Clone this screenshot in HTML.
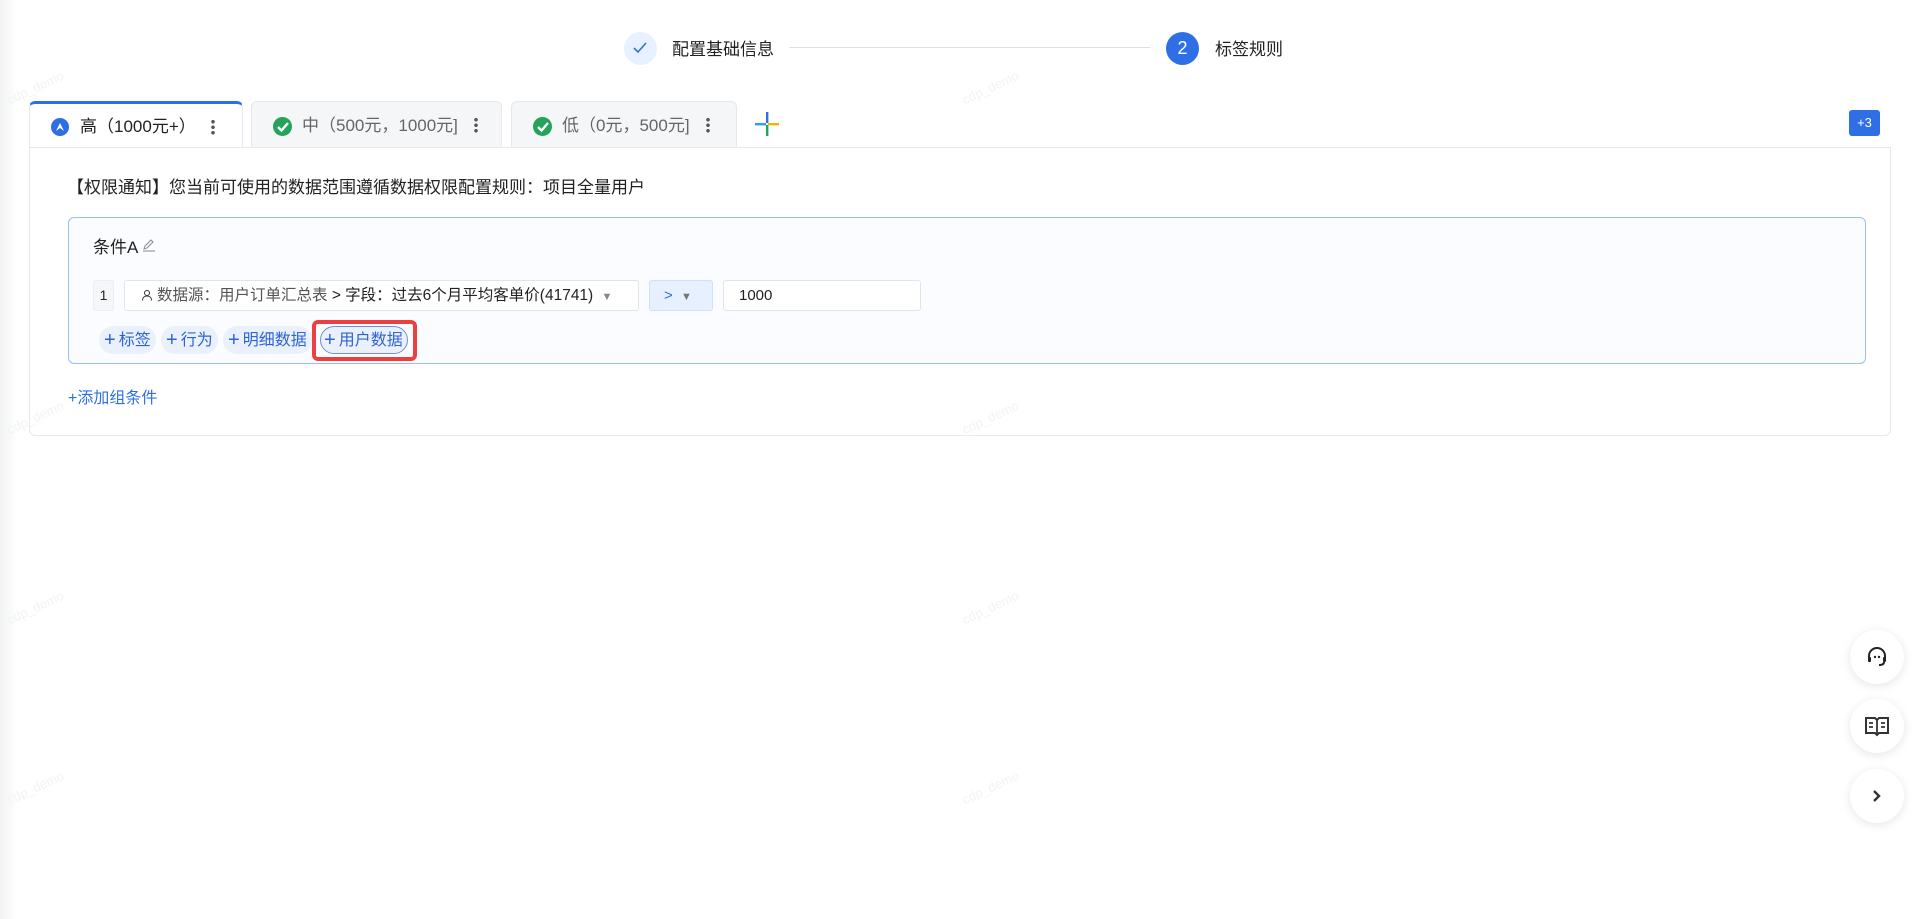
<!DOCTYPE html>
<html><head><meta charset="utf-8"><style>
*{box-sizing:border-box;margin:0;padding:0}
body{width:1918px;height:919px;background:#fff;font-family:"Liberation Sans","Noto Sans CJK SC",sans-serif;color:#1f2329;position:relative;overflow:hidden}
.abs{position:absolute}
.leftbar{left:0;top:0;width:16px;height:919px;background:linear-gradient(90deg,#f1f2f4,#fafafa 70%,#fff)}
.wm{position:absolute;color:#f2f3f5;font-size:13px;transform:rotate(-25deg)}
.tab{position:absolute;top:101px;height:47px;border:1px solid #e6e8eb;border-bottom:none;border-radius:6px 6px 0 0;background:#f5f6f8;display:flex;align-items:center;font-size:17px;color:#666}
.dots{position:absolute;width:4px;height:16px;background:radial-gradient(circle,#555 1.6px,transparent 2px) 0 0/4px 5.5px repeat-y}
.btn{position:absolute;top:326px;height:28px;border-radius:14px;background:#eaf1fd;color:#2d63d8;font-size:16px;line-height:28px;padding:0 5px}
.btn b{font-weight:normal;font-size:20px;vertical-align:-1px;margin-right:3px}
.circ{position:absolute;left:1850px;width:54px;height:54px;border-radius:50%;background:#fff;box-shadow:0 2px 10px rgba(0,0,0,.1);display:flex;align-items:center;justify-content:center}
</style></head><body>
<div class="abs leftbar"></div>
<div class="wm" style="left:5px;top:80px">cdp_demo</div><div class="wm" style="left:960px;top:80px">cdp_demo</div>
<div class="wm" style="left:5px;top:410px">cdp_demo</div><div class="wm" style="left:960px;top:410px">cdp_demo</div>
<div class="wm" style="left:5px;top:600px">cdp_demo</div><div class="wm" style="left:960px;top:600px">cdp_demo</div>
<div class="wm" style="left:5px;top:780px">cdp_demo</div><div class="wm" style="left:960px;top:780px">cdp_demo</div>

<!-- steps -->
<div class="abs" style="left:624px;top:32px;width:33px;height:33px;border-radius:50%;background:#e8f1ff"></div>
<svg class="abs" style="left:631px;top:40px" width="18" height="16"><path d="M3 8l4 4 8-9" stroke="#2f6fe6" stroke-width="1.6" fill="none"/></svg>
<div class="abs" style="left:672px;top:35px;font-size:17px;color:#222">配置基础信息</div>
<div class="abs" style="left:789px;top:47px;width:361px;height:1px;background:#dcdfe4"></div>
<div class="abs" style="left:1166px;top:32px;width:33px;height:33px;border-radius:50%;background:#2f6fe6;color:#fff;font-size:18px;text-align:center;line-height:33px">2</div>
<div class="abs" style="left:1215px;top:35px;font-size:17px;color:#222">标签规则</div>

<!-- tabs -->
<div class="tab" style="left:29px;width:214px;background:#fff;border-top:3px solid #2f6fe6;color:#222">
 <div class="abs" style="left:21px;top:14px;width:18px;height:18px;border-radius:50%;background:#2f6fe6"></div>
 <svg class="abs" style="left:24px;top:17px" width="12" height="12"><path d="M2 10L6 2l4 8L6 7z" fill="#fff"/></svg>
 <span class="abs" style="left:50px;top:8px">高（1000元+）</span>
 <div class="dots" style="left:181px;top:15px"></div>
</div>
<div class="tab" style="left:251px;width:251px">
 <div class="abs" style="left:21px;top:15px;width:19px;height:19px;border-radius:50%;background:#24a35a"></div>
 <svg class="abs" style="left:24px;top:18px" width="14" height="14"><path d="M2 7l3.5 3.5L12 3" stroke="#fff" stroke-width="2.4" fill="none"/></svg>
 <span class="abs" style="left:50px;top:9px">中（500元，1000元]</span>
 <div class="dots" style="left:222px;top:15px"></div>
</div>
<div class="tab" style="left:511px;width:226px">
 <div class="abs" style="left:21px;top:15px;width:19px;height:19px;border-radius:50%;background:#24a35a"></div>
 <svg class="abs" style="left:24px;top:18px" width="14" height="14"><path d="M2 7l3.5 3.5L12 3" stroke="#fff" stroke-width="2.4" fill="none"/></svg>
 <span class="abs" style="left:50px;top:9px">低（0元，500元]</span>
 <div class="dots" style="left:194px;top:15px"></div>
</div>
<svg class="abs" style="left:755px;top:112px" width="24" height="24"><rect x="11" y="0" width="2.4" height="11" fill="#2f6fe6"/><rect x="11" y="13" width="2.4" height="11" fill="#24a35a"/><rect x="0" y="11" width="11" height="2.4" fill="#2fa0e6"/><rect x="13" y="11" width="11" height="2.4" fill="#f5b400"/></svg>
<div class="abs" style="left:1849px;top:110px;width:31px;height:26px;border-radius:3px;background:#2f6fe6;color:#fff;font-size:13px;text-align:center;line-height:26px">+3</div>

<!-- panel -->
<div class="abs" style="left:29px;top:147px;width:1862px;height:289px;border:1px solid #e6e8eb;border-radius:0 0 6px 6px"></div>
<div class="abs" style="left:67px;top:173px;font-size:17px;color:#222">【权限通知】您当前可使用的数据范围遵循数据权限配置规则：项目全量用户</div>
<div class="abs" style="left:68px;top:217px;width:1798px;height:147px;border:1.5px solid #9dbdf5;border-radius:6px;background:#fafcff"></div>
<div class="abs" style="left:93px;top:233px;font-size:17px;color:#222">条件A</div>
<svg class="abs" style="left:141px;top:237px" width="16" height="16"><path d="M3 12l1-3 6-6 2 2-6 6zM2 14h12" stroke="#888" stroke-width="1" fill="none"/></svg>
<div class="abs" style="left:93px;top:280px;width:21px;height:31px;border:1px solid #eceef1;border-radius:3px;background:#f5f6f8;font-size:14px;text-align:center;line-height:29px">1</div>
<div class="abs" style="left:124px;top:280px;width:515px;height:31px;border:1px solid #e1e4e8;border-radius:3px;background:#fff;font-size:15.5px;line-height:29px;padding-left:16px;color:#555">
<svg style="vertical-align:-1px;margin-right:4px" width="12" height="12"><circle cx="6" cy="4" r="2.5" stroke="#333" fill="none"/><path d="M1.5 11.5c0-3 2-4.5 4.5-4.5s4.5 1.5 4.5 4.5" stroke="#333" fill="none"/></svg>数据源：用户订单汇总表 <span style="color:#222">&gt; 字段：过去6个月平均客单价(41741)</span> <span style="color:#888;font-size:11px;margin-left:4px">▼</span></div>
<div class="abs" style="left:649px;top:280px;width:64px;height:31px;border:1px solid #cfe0fa;border-radius:3px;background:#e6f0ff;font-size:15px;line-height:29px;padding-left:14px;color:#2f6fe6">&gt; <span style="color:#777;font-size:11px;margin-left:4px">▼</span></div>
<div class="abs" style="left:723px;top:280px;width:198px;height:31px;border:1px solid #e1e4e8;border-radius:3px;background:#fff;font-size:15px;line-height:29px;padding-left:15px;color:#222">1000</div>
<div class="btn" style="left:99px"><b>+</b>标签</div>
<div class="btn" style="left:161px"><b>+</b>行为</div>
<div class="btn" style="left:223px"><b>+</b>明细数据</div>
<div class="abs" style="left:312px;top:320px;width:105px;height:41px;border:4px solid #ec4040;border-radius:6px"></div>
<div class="btn" style="left:320px;border:1px solid #6f8fd9;line-height:26px;width:88px;white-space:nowrap;padding:0 3px"><b>+</b>用户数据</div>
<div class="abs" style="left:68px;top:384px;font-size:16px;color:#2f6fe6">+添加组条件</div>

<!-- floating -->
<div class="circ" style="top:630px"><svg width="24" height="24" viewBox="0 0 24 24"><path d="M4 14v-3a8 8 0 0116 0v3" stroke="#222" stroke-width="2" fill="none"/><rect x="3" y="12" width="3" height="5" rx="1" fill="#222"/><rect x="18" y="12" width="3" height="5" rx="1" fill="#222"/><path d="M19 17c0 2-2 3-5 3" stroke="#222" stroke-width="2" fill="none"/><circle cx="10" cy="12" r="1.2" fill="#222"/><circle cx="14" cy="12" r="1.2" fill="#222"/></svg></div>
<div class="circ" style="top:699px"><svg width="26" height="22" viewBox="0 0 26 22"><path d="M2 3h9l2 2 2-2h9v15h-9l-2 2-2-2H2z" stroke="#333" stroke-width="2" fill="none"/><path d="M13 5v14M5 8h4M5 12h4M17 8h4M17 12h4" stroke="#333" stroke-width="1.8"/></svg></div>
<div class="circ" style="top:769px"><svg width="12" height="14"><path d="M3 2l5 5-5 5" stroke="#333" stroke-width="2.4" fill="none"/></svg></div>
</body></html>
